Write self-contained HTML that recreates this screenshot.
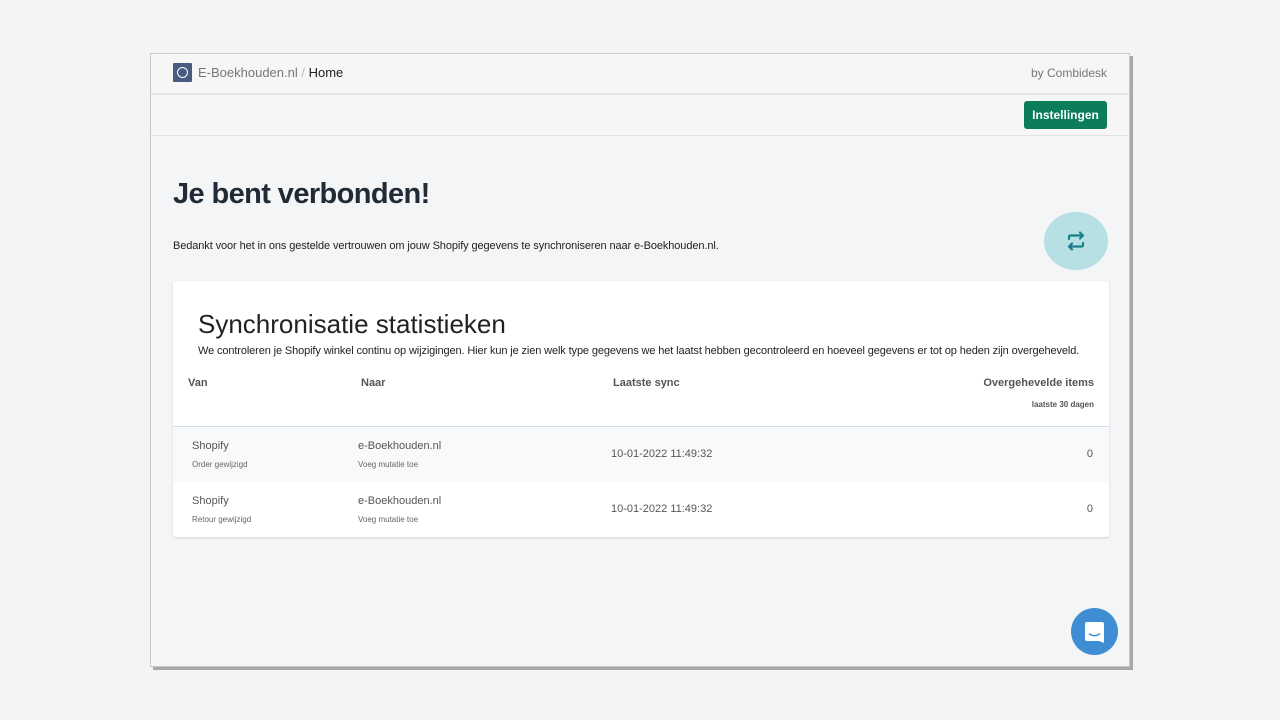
<!DOCTYPE html>
<html><head><meta charset="utf-8"><style>
*{box-sizing:border-box;margin:0;padding:0}
body{width:1280px;height:720px;background:#f3f4f6;font-family:"Liberation Sans",sans-serif;position:relative;overflow:hidden}
.frame{position:absolute;left:150px;top:53px;width:980px;height:614px;background:#f4f5f7;border:1px solid #c9c9c9;box-shadow:3px 3px 0 #a8a8a8;overflow:hidden}
.top{height:41px;background:#f6f6f6;border-bottom:2px solid #e6e6e6;position:relative}
.logo{position:absolute;left:22px;top:9px;width:19px;height:19px;background:#4b5a80;border-radius:1px}
.logo:after{content:"";position:absolute;left:4px;top:4px;width:9px;height:9px;border:1.5px solid #fff;border-radius:50%}
.bc{position:absolute;left:47px;top:11px;font-size:13px;color:#777}
.bc b{font-weight:normal;color:#222}
.by{position:absolute;right:22px;top:12px;font-size:12px;color:#777}
.bar{height:41px;background:#f6f6f6;border-bottom:1px solid #e2e2e2;position:relative}
.btn{position:absolute;right:22px;top:6px;width:83px;height:28px;background:#0b7d5b;color:#fff;border-radius:3px;font-size:12px;font-weight:bold;text-align:center;line-height:28px}
h1{position:absolute;left:22px;top:124px;font-size:29px;letter-spacing:-0.6px;font-weight:bold;color:#212b36}
.sub{position:absolute;left:22px;top:186px;font-size:11px;letter-spacing:-0.1px;color:#222}
.circ{position:absolute;left:893px;top:158px;width:64px;height:58px;border-radius:50%;background:#b7e0e5}
.card{position:absolute;left:22px;top:227px;width:936px;height:256px;background:#fff;box-shadow:0 1px 2px rgba(0,0,0,.15);border-radius:3px}
.card h2{position:absolute;left:25px;top:28px;font-size:26px;font-weight:normal;color:#222}
.card p{position:absolute;left:25px;top:64px;font-size:11px;letter-spacing:-0.12px;color:#222}
.th{position:absolute;top:96px;font-size:11px;font-weight:bold;color:#555}
.row{position:absolute;left:0;width:936px;height:55px}
.t1{position:absolute;font-size:11px;color:#555}
.t2{position:absolute;font-size:8px;color:#666}
.chat{position:absolute;left:920px;top:554px;width:47px;height:47px;border-radius:50%;background:#3f8ed3}
</style></head><body>
<div class="frame">
<div class="top"><div class="logo"></div><div class="bc">E-Boekhouden.nl <span style="color:#bbb">/</span> <b>Home</b></div><div class="by">by Combidesk</div></div>
<div class="bar"><div class="btn">Instellingen</div></div>
<h1>Je bent verbonden!</h1>
<div class="sub">Bedankt voor het in ons gestelde vertrouwen om jouw Shopify gegevens te synchroniseren naar e-Boekhouden.nl.</div>
<div class="circ"><svg width="64" height="58" viewBox="0 0 64 58"><g fill="none" stroke="#18808c" stroke-width="2.2" stroke-linecap="round" stroke-linejoin="round"><path d="M25 27v-2q0-1.5 1.5-1.5H39M36 20.5l3 3-3 3"/><path d="M39 31v2q0 1.5-1.5 1.5H25M28 31.5l-3 3 3 3"/></g></svg></div>
<div class="card">
<h2>Synchronisatie statistieken</h2>
<p>We controleren je Shopify winkel continu op wijzigingen. Hier kun je zien welk type gegevens we het laatst hebben gecontroleerd en hoeveel gegevens er tot op heden zijn overgeheveld.</p>
<div class="th" style="left:15px">Van</div>
<div class="th" style="left:188px">Naar</div>
<div class="th" style="left:440px">Laatste sync</div>
<div class="th" style="right:15px">Overgehevelde items</div>
<div class="th" style="right:15px;top:119px;font-size:8px">laatste 30 dagen</div>
<div style="position:absolute;left:0;top:145px;width:936px;height:1px;background:#d6dde6"></div>
<div class="row" style="top:146px;background:#f8f9fb">
<div class="t1" style="left:19px;top:13px">Shopify</div><div class="t2" style="left:19px;top:33px">Order gewijzigd</div>
<div class="t1" style="left:185px;top:13px">e-Boekhouden.nl</div><div class="t2" style="left:185px;top:33px">Voeg mutatie toe</div>
<div class="t1" style="left:438px;top:21px">10-01-2022 11:49:32</div><div class="t1" style="right:16px;top:21px">0</div></div>
<div class="row" style="top:201px">
<div class="t1" style="left:19px;top:13px">Shopify</div><div class="t2" style="left:19px;top:33px">Retour gewijzigd</div>
<div class="t1" style="left:185px;top:13px">e-Boekhouden.nl</div><div class="t2" style="left:185px;top:33px">Voeg mutatie toe</div>
<div class="t1" style="left:438px;top:21px">10-01-2022 11:49:32</div><div class="t1" style="right:16px;top:21px">0</div></div>
</div>
<div class="chat"><svg width="47" height="47" viewBox="0 0 47 47"><path d="M16 14h15a2 2 0 0 1 2 2v19l-5-2H16a2 2 0 0 1-2-2V16a2 2 0 0 1 2-2z" fill="#fff"/><path d="M18.5 26q5 3.5 10 0" fill="none" stroke="#3f8ed3" stroke-width="1.5" stroke-linecap="round"/></svg></div>
</div>
</body></html>
